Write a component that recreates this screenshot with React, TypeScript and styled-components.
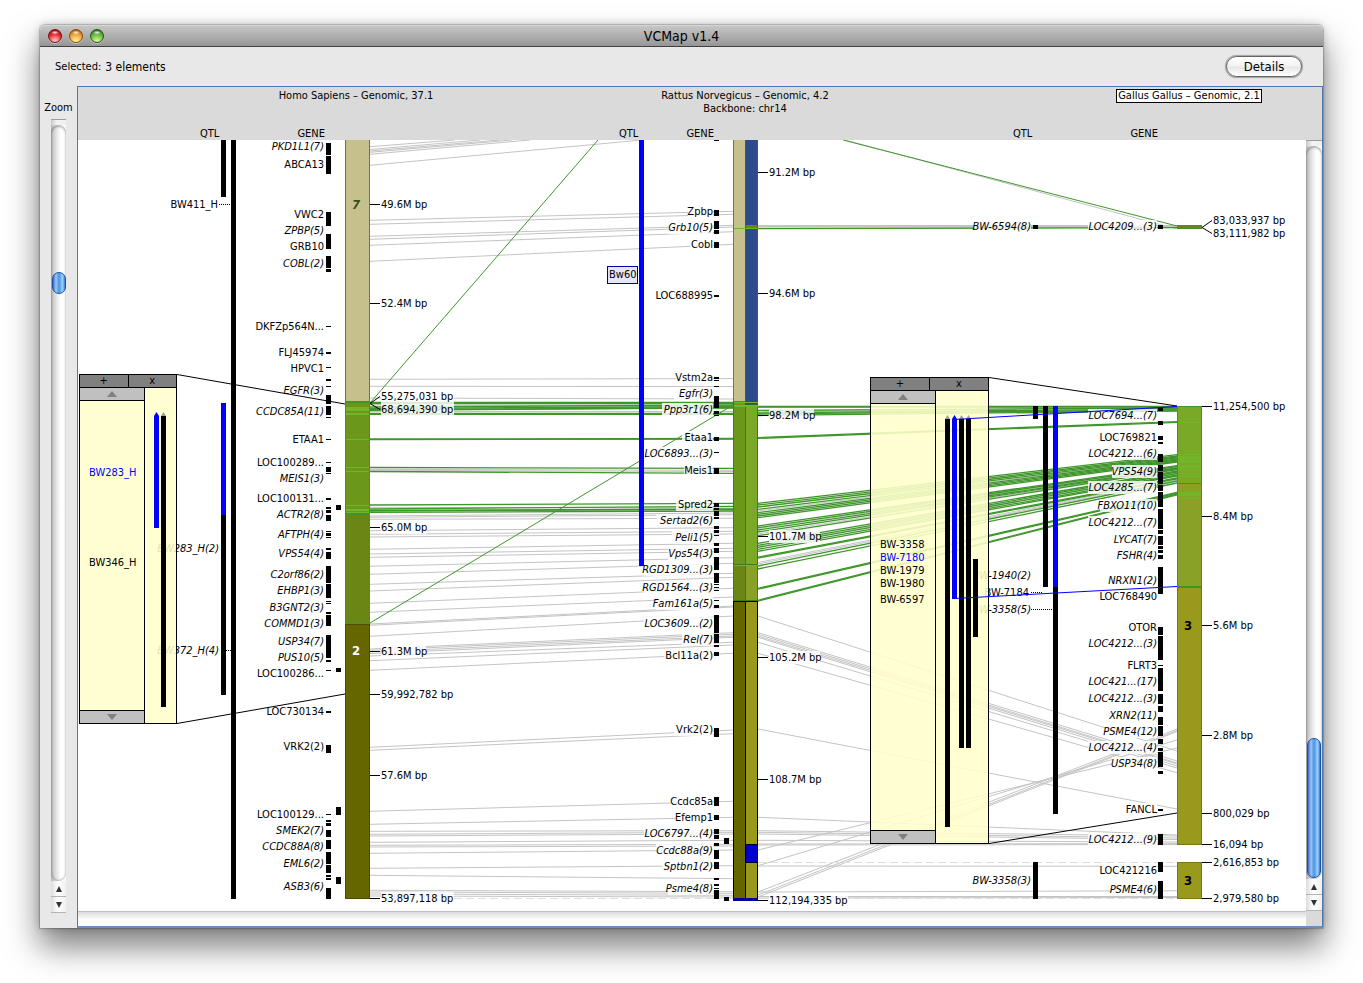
import React from 'react';
import styled, { createGlobalStyle } from 'styled-components';

const FONT = '"DejaVu Sans Condensed", "Noto Sans", sans-serif';

const GlobalStyle = createGlobalStyle`
  * { box-sizing: border-box; }
  body { margin: 0; background: #fff; font-family: ${FONT}; font-size: 11px; color: #000; }
  button { font-family: inherit; color: inherit; padding: 0; margin: 0; }
`;

/* ---------- window chrome ---------- */

const Page = styled.div`
  padding: 25px 40px 55px;
  overflow: hidden;
`;

const AppWindow = styled.main`
  display: flex;
  flex-direction: column;
  background: #e8e8e8;
  border-radius: 5px 5px 0 0;
  box-shadow: 0 18px 32px 1px rgba(0, 0, 0, 0.5), 0 0 8px rgba(0, 0, 0, 0.2), 0 0 1px 1px rgba(0, 0, 0, 0.2);
`;

const TitleBar = styled.header`
  display: grid;
  grid-template-columns: 1fr auto 1fr;
  align-items: center;
  height: 22px;
  padding: 0 8px;
  border-radius: 5px 5px 0 0;
  border-top: 1px solid #d6d6d6;
  border-bottom: 1px solid #404040;
  background: linear-gradient(#c6c6c6, #969696);
`;

const Lights = styled.div`
  display: flex;
  gap: 7px;
`;

const Light = styled.button<{ $dark: string; $mid: string; $glow: string }>`
  width: 14px;
  height: 14px;
  border: 1px solid ${(p) => p.$dark};
  border-radius: 50%;
  background:
    radial-gradient(ellipse 4px 2px at 50% 22%, rgba(255, 255, 255, 0.9), transparent),
    radial-gradient(circle at 50% 95%, ${(p) => p.$glow} 10%, ${(p) => p.$mid} 60%, ${(p) => p.$dark});
  box-shadow: 0 1px 0 rgba(255, 255, 255, 0.4);
`;

const WindowTitle = styled.h1`
  margin: 0;
  font-size: 14px;
  line-height: 20px;
  font-weight: 400;
`;

const Toolbar = styled.div`
  display: flex;
  align-items: center;
  height: 39px;
  padding: 0 21px 0 15px;
  gap: 4px;
`;

const Caption = styled.span`
  font-size: 11px;
  line-height: 16px;
`;

const SelectionCount = styled.output`
  flex: 1;
  font-size: 12px;
  line-height: 16px;
`;

const DetailsButton = styled.button`
  width: 76px;
  height: 21px;
  border: 1px solid #636363;
  border-radius: 11px;
  box-shadow: 0 0 1px 1px rgba(0, 0, 0, 0.3);
  font-size: 13px;
  line-height: 16px;
  background: linear-gradient(#ffffff, #f2f2f2 48%, #e6e6e6 52%, #ffffff);
`;

const Body = styled.div`
  display: flex;
  align-items: stretch;
`;

const ZoomPanel = styled.aside`
  width: 37px;
  display: flex;
  flex-direction: column;
  align-items: center;
  padding: 14px 0 15px;
`;

const ZoomLabel = styled.label`
  font-size: 11px;
  line-height: 16px;
  margin-bottom: 3px;
`;

/* ---------- scroll bars ---------- */

const Bar = styled.div`
  width: 15px;
  flex: 1;
  display: flex;
  flex-direction: column;
  background: linear-gradient(90deg, #b4b4b4, #dedede 30%, #ffffff 65%, #fafafa);
`;

const BarCap = styled.div`
  height: 6px;
  border-top: 1px solid #9c9c9c;
  background: linear-gradient(90deg, #c9c9c9, #f4f4f4 40%, #efefef);
`;

const BarTrack = styled.div`
  flex: 1;
  display: flex;
  flex-direction: column;
  align-items: center;
  border-radius: 8px;
  box-shadow: inset 0 2px 2px rgba(0, 0, 0, 0.25), inset 0 -1px 2px rgba(0, 0, 0, 0.25);
`;

const Gap = styled.div<{ $grow: number }>`
  flex: ${(p) => p.$grow} 1 0;
`;

const Thumb = styled.div<{ $height: number }>`
  width: 14px;
  height: ${(p) => p.$height}px;
  border-radius: 7px;
  border: 1px solid #1f4fa3;
  background: linear-gradient(90deg, #3668c8, #9cc7f4 25%, #4b93e8 50%, #9ad3fb 80%, #3c74cc);
`;

const BarButton = styled.button`
  height: 16px;
  display: flex;
  align-items: center;
  justify-content: center;
  border: 0;
  border-bottom: 1px solid #b4b4b4;
  background: linear-gradient(90deg, #dcdcdc, #ffffff 45%, #f0f0f0);
`;

const Arrow = ({ down, wide }: { down?: boolean; wide?: boolean }) => (
  <svg
    width={wide ? 10 : 6}
    height={6}
    viewBox="0 0 8 8"
    preserveAspectRatio="none"
    fill={wide ? '#808080' : '#333'}
    aria-hidden="true"
  >
    <path d={down ? 'M0 0h8L4 8z' : 'M0 8h8L4 0z'} />
  </svg>
);

type ScrollProps = { id?: string; label: string; thumb: number; before: number; after: number };

const VerticalScroll = ({ id, label, thumb, before, after }: ScrollProps) => (
  <Bar>
    <BarCap />
    <BarTrack id={id} role="scrollbar" aria-label={label} aria-orientation="vertical" aria-controls="map" aria-valuenow={Math.round((100 * before) / (before + after))}>
      <Gap $grow={before} />
      <Thumb $height={thumb} />
      <Gap $grow={after} />
    </BarTrack>
    <BarButton aria-label={`${label} up`}><Arrow /></BarButton>
    <BarButton aria-label={`${label} down`}><Arrow down /></BarButton>
  </Bar>
);

const HorizontalBar = styled.div`
  flex: 1;
  height: 15px;
  border-top: 1px solid #c0c0c0;
  background: linear-gradient(#dcdcdc, #fafafa 50%, #ffffff);
`;

const Corner = styled.div`
  width: 16px;
  background: #dadada;
`;

/* ---------- map frame and its heading ---------- */

const MapFrame = styled.section`
  flex: 1;
  min-width: 0;
  border: 1px solid #4f78ac;
  border-bottom: 2px solid #6290c8;
`;

const MapHead = styled.div`
  display: flex;
  height: 53px;
  background: #dadada;
  overflow: hidden;
`;

const Species = styled.div<{ $width: number }>`
  flex: 0 0 ${(p) => p.$width}px;
  display: flex;
  flex-direction: column;
  justify-content: space-between;
`;

const SpeciesTitle = styled.div`
  width: 222px;
  margin: 2px 0 0 167px;
  text-align: center;
  line-height: 13px;
`;

const SpeciesName = styled.span<{ $active?: boolean }>`
  display: inline-block;
  padding: 0 1px;
  line-height: ${(p) => (p.$active ? 12 : 13)}px;
  ${(p) => (p.$active ? 'border: 1px solid #000; background: #fff;' : '')}
`;

const TrackNames = styled.div<{ $inset: number }>`
  display: flex;
  justify-content: space-between;
  width: 247px;
  padding-left: ${(p) => p.$inset}px;
  line-height: 13px;
`;

const MapBody = styled.div`
  display: flex;
`;

const Canvas = styled.div`
  position: relative;
  flex: 1;
  min-width: 0;
  height: 771px;
  overflow: hidden;
  background: #fff;
`;

const Scene = styled.svg`
  display: block;
  font-family: ${FONT};
  font-size: 11px;
`;

const Overlay = styled(Scene)`
  position: absolute;
  left: 0;
  top: 0;
  pointer-events: none;
`;

const MapFoot = styled.div`
  display: flex;
`;

const ScrollSlot = styled.div`
  display: flex;
  width: 16px;
`;

/* ---------- overlap boxes ---------- */

const Popup = styled.div<{ $x: number; $y: number; $w: number; $h: number }>`
  position: absolute;
  left: ${(p) => p.$x}px;
  top: ${(p) => p.$y}px;
  width: ${(p) => p.$w}px;
  height: ${(p) => p.$h}px;
  display: flex;
  flex-direction: column;
  border: 1px solid #000;
  background: rgba(255, 255, 204, 0.88);
`;

const PopupHead = styled.div`
  display: flex;
  height: 13px;
  border-bottom: 1px solid #000;
  background: #808080;
`;

const PopupButton = styled.button`
  flex: 1;
  border: 0;
  background: none;
  font-size: 11px;
  line-height: 12px;
  & + & { border-left: 1px solid #000; }
`;

const PopupList = styled.div`
  width: 65px;
  flex: 1;
  display: flex;
  flex-direction: column;
  justify-content: space-between;
  border-right: 1px solid #000;
`;

const PopupScroll = styled.button<{ $down?: boolean }>`
  height: 13px;
  display: flex;
  align-items: center;
  justify-content: center;
  border: 0;
  border-${(p) => (p.$down ? 'top' : 'bottom')}: 1px solid #000;
  background: #c0c0c0;
`;

const OverlapBox = ({ name, ...box }: { name: string; $x: number; $y: number; $w: number; $h: number }) => (
  <Popup {...box} role="group" aria-label={name}>
    <PopupHead>
      <PopupButton>+</PopupButton>
      <PopupButton>x</PopupButton>
    </PopupHead>
    <PopupList>
      <PopupScroll aria-label={`${name} up`}><Arrow wide /></PopupScroll>
      <PopupScroll $down aria-label={`${name} down`}><Arrow down wide /></PopupScroll>
    </PopupList>
  </Popup>
);

/* ---------- map data ---------- */
/* All positions are in scene units; the visible part starts at (78, 140). */

const VIEW = { x: 78, y: 140, w: 1228, h: 771 };

type LabelData = [string, number];
type Span = [number, number];

const GENES: { end: number; labels: LabelData[] }[] = [
  {
    end: 324,
    labels: [
      ['PKD1L1(7)', 146], ['ABCA13', 164], ['VWC2', 214], ['ZPBP(5)', 230], ['GRB10', 246], ['COBL(2)', 263],
      ['DKFZp564N...', 326], ['FLJ45974', 352], ['HPVC1', 368], ['EGFR(3)', 390], ['CCDC85A(11)', 411],
      ['ETAA1', 439], ['LOC100289...', 462], ['MEIS1(3)', 478], ['LOC100131...', 498], ['ACTR2(8)', 514],
      ['AFTPH(4)', 534], ['VPS54(4)', 553], ['C2orf86(2)', 574], ['EHBP1(3)', 590], ['B3GNT2(3)', 607],
      ['COMMD1(3)', 623], ['USP34(7)', 641], ['PUS10(5)', 657], ['LOC100286...', 673], ['LOC730134', 711],
      ['VRK2(2)', 746], ['LOC100129...', 814], ['SMEK2(7)', 830], ['CCDC88A(8)', 846], ['EML6(2)', 863], ['ASB3(6)', 886],
    ],
  },
  {
    end: 713,
    labels: [
      ['Zpbp', 211], ['Grb10(5)', 227], ['Cobl', 244], ['LOC688995', 295], ['Vstm2a', 377], ['Egfr(3)', 393],
      ['Ppp3r1(6)', 409], ['Etaa1', 437], ['LOC6893...(3)', 453], ['Meis1', 470], ['Spred2', 504],
      ['Sertad2(6)', 520], ['Peli1(5)', 537], ['Vps54(3)', 553], ['RGD1309...(3)', 569], ['RGD1564...(3)', 587],
      ['Fam161a(5)', 603], ['LOC3609...(2)', 623], ['Rel(7)', 639], ['Bcl11a(2)', 655], ['Vrk2(2)', 729],
      ['Ccdc85a', 801], ['Efemp1', 817], ['LOC6797...(4)', 833], ['Ccdc88a(9)', 850], ['Sptbn1(2)', 866], ['Psme4(8)', 888],
    ],
  },
  {
    end: 1157,
    labels: [
      ['LOC4209...(3)', 226], ['LOC7694...(7)', 415], ['LOC769821', 437], ['LOC4212...(6)', 453], ['VPS54(9)', 471],
      ['LOC4285...(7)', 487], ['FBXO11(10)', 505], ['LOC4212...(7)', 522], ['LYCAT(7)', 539], ['FSHR(4)', 555],
      ['NRXN1(2)', 580], ['LOC768490', 596], ['OTOR', 627], ['LOC4212...(3)', 643], ['FLRT3', 665],
      ['LOC421...(17)', 681], ['LOC4212...(3)', 698], ['XRN2(11)', 715], ['PSME4(12)', 731], ['LOC4212...(4)', 747],
      ['USP34(8)', 763], ['FANCL', 809], ['LOC4212...(9)', 839], ['LOC421216', 870], ['PSME4(6)', 889],
    ],
  },
];

/* Pairs that are drawn upright although they hold a count. */
const UPRIGHT = new Set(['VRK2(2)', 'Bcl11a(2)', 'Vrk2(2)']);

const GENE_BARS: { x: number; spans: Span[] }[] = [
  {
    x: 326,
    spans: [
      [143, 155], [156, 174], [212, 226], [234, 249], [256, 268], [269, 272], [326, 327], [352, 354], [367, 368],
      [379, 381], [386, 387], [395, 404], [406, 415], [417, 418], [439, 440], [462, 463], [467, 472], [473, 474],
      [498, 500], [507, 509], [510, 513], [515, 521], [531, 532], [533, 536], [537, 538], [548, 550], [552, 559],
      [566, 583], [584, 598], [601, 602], [603, 604], [612, 614], [615, 626], [635, 658], [660, 662], [670, 671],
      [711, 713], [745, 753], [814, 815], [820, 822], [823, 826], [830, 837], [840, 849], [852, 864], [865, 873],
      [875, 877], [878, 880], [888, 899],
    ],
  },
  { x: 336, spans: [[505, 510], [668, 672], [807, 815], [877, 884]] },
  {
    x: 714,
    spans: [
      [140, 141], [210, 216], [221, 229], [230, 234], [242, 248], [295, 297], [377, 379], [380, 381], [386, 387],
      [396, 408], [411, 414], [415, 416], [437, 441], [452, 453], [468, 474], [503, 507], [508, 510], [511, 516],
      [517, 519], [526, 529], [530, 533], [535, 536], [543, 546], [548, 553], [557, 570], [573, 583], [584, 585],
      [587, 588], [590, 591], [600, 601], [605, 608], [615, 633], [634, 643], [645, 647], [652, 656], [728, 737],
      [797, 806], [815, 820], [829, 834], [835, 839], [843, 846], [850, 859], [862, 869], [878, 880], [884, 886],
      [888, 889], [890, 899],
    ],
  },
  { x: 724, spans: [[838, 844], [897, 901]] },
  {
    x: 1158,
    spans: [
      [225, 229], [407, 411], [421, 425], [436, 440], [442, 444], [454, 462], [465, 471], [472, 484], [485, 491],
      [492, 507], [509, 529], [530, 534], [536, 545], [546, 549], [550, 553], [555, 559], [567, 594], [627, 635],
      [636, 660], [665, 666], [668, 691], [694, 704], [706, 712], [717, 725], [726, 736], [739, 744], [748, 751],
      [752, 767], [771, 774], [809, 811], [834, 845], [862, 872], [881, 899],
    ],
  },
];

/* x, top, bottom, selected */
const QTL_BARS: [number, number, number, boolean][] = [
  [221, 140, 197, false], [231, 140, 899, false], [221, 403, 515, true], [221, 515, 695, false],
  [639, 140, 566, true],
  [1033, 225, 229, false], [1033, 406, 419, false], [1043, 406, 587, false], [1053, 406, 587, true],
  [1053, 587, 814, false], [1033, 862, 899, false],
];

const QTL_LABELS: [string, number, number][] = [
  ['BW411_H', 218, 204], ['BW283_H(2)', 219, 548], ['BW372_H(4)', 219, 650],
  ['BW-6594(8)', 1031, 226], ['BW-1940(2)', 1031, 575], ['BW-7184', 1029, 592], ['BW-3358(5)', 1031, 609],
  ['BW-3358(3)', 1031, 880],
];

const DOTS: [number, number, number][] = [
  [219, 231, 204], [226, 231, 650], [1031, 1043, 592], [1031, 1053, 609],
];

/* x of the tick, y of the label and optional y where the tick starts */
const TICKS: [number, string, number, number?][] = [
  [370, '49.6M bp', 204], [370, '52.4M bp', 303], [370, '55,275,031 bp', 396, 403], [370, '68,694,390 bp', 409, 403],
  [370, '65.0M bp', 527], [370, '61.3M bp', 651], [370, '59,992,782 bp', 694], [370, '57.6M bp', 775],
  [370, '53,897,118 bp', 898],
  [758, '91.2M bp', 172], [758, '94.6M bp', 293], [758, '98.2M bp', 415], [758, '101.7M bp', 536],
  [758, '105.2M bp', 657], [758, '108.7M bp', 779], [758, '112,194,335 bp', 900],
  [1202, '83,033,937 bp', 220, 227], [1202, '83,111,982 bp', 233, 227], [1202, '11,254,500 bp', 406],
  [1202, '8.4M bp', 516], [1202, '5.6M bp', 625], [1202, '2.8M bp', 735], [1202, '800,029 bp', 813],
  [1202, '16,094 bp', 844], [1202, '2,616,853 bp', 862], [1202, '2,979,580 bp', 898],
];

/* x, y, width, height, fill, edge */
const SEGMENTS: [number, number, number, number, string, string][] = [
  [345, 138, 25, 264, '#c6c18c', '#43932b'],
  [345, 402, 25, 112, '#6b981b', '#43932b'],
  [345, 514, 25, 110, '#6a8715', '#43932b'],
  [345, 624, 25, 275, '#666600', '#4d4d00'],
  [733, 138, 13, 264, '#c6c18c', '#43932b'],
  [733, 402, 13, 163, '#6b981b', '#3c7d1a'],
  [733, 565, 13, 36, '#6a8715', '#3c7d1a'],
  [733, 601, 13, 298, '#666600', '#000000'],
  [745, 138, 13, 267, '#2f4a8c', '#2b6a3a'],
  [745, 405, 13, 160, '#7aa928', '#3c7d1a'],
  [745, 565, 13, 36, '#88a126', '#3c7d1a'],
  [745, 601, 13, 244, '#99991e', '#000000'],
  [745, 844, 13, 19, '#0000cc', '#000000'],
  [745, 862, 13, 37, '#99991e', '#000000'],
  [733, 898, 25, 3, '#0000a0', '#0000a0'],
  [1177, 225, 25, 4, '#6a8715', '#43932b'],
  [1177, 406, 25, 78, '#7aa928', '#43932b'],
  [1177, 483, 25, 104, '#88a126', '#43932b'],
  [1177, 587, 25, 258, '#99991e', '#77770f'],
  [1177, 862, 25, 37, '#99991e', '#77770f'],
];

/* Bright stripes across the chromosomes: x, y, width, height */
const STRIPES: [number, number, number, number][] = [
  [346, 407, 23, 4], [346, 413, 23, 2], [346, 439, 23, 1], [346, 467, 23, 1], [346, 471, 23, 1], [346, 505, 23, 1],
  [346, 509, 23, 2], [346, 512, 23, 1],
  [734, 402, 24, 1], [734, 405, 24, 2], [734, 228, 24, 1], [734, 565, 24, 1],
  [1178, 422, 23, 1], [1178, 454, 23, 1], [1178, 456, 23, 7], [1178, 465, 23, 4], [1178, 470, 23, 1],
  [1178, 473, 23, 1], [1178, 476, 23, 1], [1178, 492, 23, 4], [1178, 498, 23, 1],
];

/* Links between neighbouring maps: y on the left, y on the right */
const GRAY_A: Span[] = [
  [220.3, 211.3], [224.3, 214.3], [236.3, 225.3], [239.3, 227], [245.3, 231.7], [261.3, 244.3], [379.3, 378.6],
  [386.3, 386.6], [398, 399], [405, 405.5], [411.5, 411.5], [469.3, 470.3], [470.3, 471.5], [507.3, 508],
  [516, 513], [517.3, 514.7], [519.3, 518.3], [530.7, 527.7], [534.3, 531.3], [537, 534], [549.3, 543.3],
  [554, 548.3], [557.3, 551.3], [566.3, 557.7], [574.3, 563.3], [584.3, 573.3], [591, 577.3], [603.3, 588.3],
  [612.3, 597], [624, 606], [625.3, 607], [636.3, 616], [649, 632.7], [650.3, 634.3], [652, 636], [653.7, 637.3],
  [656, 642.3], [660.7, 645], [670.3, 653.3], [747.3, 730], [750.3, 733.7], [811.3, 801.3], [824.3, 817.3],
  [831.3, 830.7], [834.3, 832.3], [836, 834], [842.3, 840.3], [845.3, 844.3], [847, 846], [853.3, 850],
  [868.3, 865.7], [875.3, 878.7], [890.3, 891.7], [892, 893.3], [894, 895.3], [896, 897],
];

const GREEN_A: Span[] = [
  [402.5, 402.5], [403.5, 403.5], [407, 405], [408.5, 406.5], [409.6, 408], [410.4, 407.5], [413.5, 413.5],
  [414.3, 414.3], [439, 438.5], [439.7, 439], [467.5, 468.4], [471.5, 473.4], [505, 503.3], [509, 506.3],
  [510.3, 509], [511, 509.6], [512.3, 511],
];

const GRAY_B: Span[] = [
  [225.5, 225.5], [226.5, 226.5], [412, 408], [415, 410.5], [511, 458.5], [528.5, 467.5], [534, 469],
  [546.5, 473], [562.5, 479], [564, 480], [616, 751], [632.7, 761], [634.3, 763], [636, 764], [637.3, 766],
  [642.3, 768], [653.3, 772.7], [850, 748], [865.7, 740], [892, 729], [895, 730.5], [897, 731.5], [729, 809],
  [817.3, 835], [830.7, 836], [832.3, 838], [834, 839.5], [840.3, 842], [844, 843.6], [845, 844.6],
  [866, 866.3], [892, 890.8], [896.5, 896.5], [898, 897.5],
];

const GREEN_B: Span[] = [
  [228.5, 227.7], [406.5, 406.5], [407.2, 407], [410.5, 408], [413, 409], [414, 410], [415.5, 411], [437.6, 421.6],
  [438.4, 422.4], [503.3, 454.7], [505, 456], [507, 457], [509.3, 457.8], [512.7, 459], [514.3, 460], [516, 461],
  [517.7, 462], [526, 465.6], [527.7, 466.5], [530, 468], [532, 468.6], [535.7, 469.5], [543.3, 471],
  [545.3, 472], [547.3, 473.5], [549.3, 475], [551.3, 476], [557.2, 478], [558, 478.8], [566, 481], [569, 483],
  [588.3, 492.4], [589.2, 493.2], [600.3, 494], [601.1, 494.8],
];

/* ---------- map drawing ---------- */

const isGroup = (text: string) => /\(\d+\)$/.test(text) && !UPRIGHT.has(text);
const roughWidth = (text: string) => [...text].reduce((sum, c) => sum + (/[.,()il ]/.test(c) ? 4 : 6), 1);

const Label = ({ text, x, y, anchor = 'end' }: { text: string; x: number; y: number; anchor?: 'start' | 'end' }) => {
  const w = roughWidth(text);
  return (
    <g>
      <rect x={anchor === 'end' ? x - w : x} y={y - 6} width={w} height={13} fill="#fff" fillOpacity={0.82} />
      <text x={x} y={y + 4} textAnchor={anchor} fontStyle={isGroup(text) ? 'italic' : 'normal'}>{text}</text>
    </g>
  );
};

const Links = ({ from, to, pairs, color, width }: { from: number; to: number; pairs: Span[]; color: string; width: number }) => (
  <g stroke={color} strokeWidth={width}>
    {pairs.map(([a, b], i) => (
      <line key={i} x1={from} y1={a} x2={to} y2={b} />
    ))}
  </g>
);

const GRAY = '#c4c4c4';
const GREEN = '#3f962b';

const MapScene = () => (
  <Scene width={VIEW.w} height={VIEW.h} viewBox={`${VIEW.x} ${VIEW.y} ${VIEW.w} ${VIEW.h}`} role="img" aria-label="Synteny map">
    <g stroke={GRAY}>
      {[[146.7, 455], [149.5, 480], [151, 500], [152.3, 512], [154.3, 530], [165.3, 642]].map(([y, x]) => (
        <line key={y} x1={370} y1={y} x2={x} y2={140} />
      ))}
      <line x1={845} y1={140} x2={1177} y2={229} />
    </g>
    <Links from={370} to={733} pairs={GRAY_A} color={GRAY} width={1} />
    <Links from={758} to={1177} pairs={GRAY_B} color={GRAY} width={1} />
    <g stroke="#dedede" strokeDasharray="8 4">
      <line x1={758} y1={862.5} x2={1177} y2={862.5} />
      <line x1={370} y1={898.5} x2={733} y2={898.5} />
      <line x1={758} y1={898.5} x2={1177} y2={898.5} />
    </g>
    <Links from={370} to={733} pairs={GREEN_A} color={GREEN} width={1.3} />
    <Links from={758} to={1177} pairs={GREEN_B} color={GREEN} width={1.3} />
    <g stroke={GREEN}>
      <line x1={370} y1={403} x2={598} y2={140} />
      <line x1={370} y1={623} x2={733} y2={405} />
      <line x1={843} y1={140} x2={1177} y2={226} />
    </g>

    {SEGMENTS.map(([x, y, w, h, fill, edge], i) => (
      <rect key={i} x={x + 0.5} y={y + 0.5} width={w - 1} height={h - 1} fill={fill} stroke={edge} />
    ))}
    <rect x={746} y={225} width={11} height={3} fill="#6a8715" />
    {STRIPES.map(([x, y, w, h], i) => (
      <rect key={i} x={x} y={y} width={w} height={h} fill="#72b528" />
    ))}

    {GENES.map((g) => g.labels.map(([text, y]) => <Label key={`${g.end}-${y}`} text={text} x={g.end} y={y} />))}
    {QTL_LABELS.map(([text, x, y]) => <Label key={`${x}-${y}`} text={text} x={x} y={y} />)}
    {QTL_BARS.map(([x, top, bottom, on], i) => (
      <rect key={i} x={x} y={top} width={5} height={bottom - top} fill={on ? '#0000ff' : '#000'} />
    ))}
    {GENE_BARS.map(({ x, spans }) =>
      spans.map(([a, b]) => <rect key={`${x}-${a}`} x={x} y={a} width={5} height={b - a} fill="#000" />)
    )}
    {DOTS.map(([a, b, y]) => (
      <line key={y} x1={a} y1={y + 0.5} x2={b} y2={y + 0.5} stroke="#000" strokeDasharray="1 1" />
    ))}
    {TICKS.map(([x, text, y, start]) => (
      <g key={`${x}-${y}`}>
        <Label text={text} x={x + 11} y={y} anchor="start" />
        <line x1={x} y1={(start ?? y) + 0.5} x2={x + 10} y2={y + 0.5} stroke="#000" />
      </g>
    ))}

    <rect x={607.5} y={266.5} width={30} height={17} fill="#e6e6f8" stroke="#0000a0" />
    <text x={609} y={278}>Bw60</text>

    <g fontSize={13} fontWeight={700} textAnchor="middle">
      <text x={356} y={209} fill="#365019" fontStyle="italic">7</text>
      <text x={356} y={655} fill="#fff">2</text>
      <text x={1188} y={630}>3</text>
      <text x={1188} y={885}>3</text>
    </g>
  </Scene>
);

/* x, top, bottom, selected, has an arrow head on top */
const BOX_BARS: [number, number, number, boolean, boolean][] = [
  [154, 416, 528, true, true], [161, 416, 707, false, true],
  [945, 419, 827, false, true], [952, 419, 599, true, true], [959, 419, 748, false, true],
  [966, 419, 748, false, true], [973, 559, 637, false, false],
];

const BOX_LABELS: [string, number, number, boolean][] = [
  ['BW283_H', 89, 472, true], ['BW346_H', 89, 562, false],
  ['BW-3358', 880, 544, false], ['BW-7180', 880, 557, true], ['BW-1979', 880, 570, false],
  ['BW-1980', 880, 583, false], ['BW-6597', 880, 599, false],
];

const BoxScene = () => (
  <Overlay width={VIEW.w} height={VIEW.h} viewBox={`${VIEW.x} ${VIEW.y} ${VIEW.w} ${VIEW.h}`}>
    {BOX_BARS.map(([x, top, bottom, on, head]) => (
      <g key={x}>
        <rect x={x} y={top} width={5} height={bottom - top} fill={on ? '#0000ff' : '#000'} />
        {head && <path d={`M${x} ${top}L${x + 2.5} ${top - 4}L${x + 5} ${top}z`} fill={on ? '#0000ff' : '#a0a084'} />}
      </g>
    ))}
    {BOX_LABELS.map(([text, x, y, on]) => (
      <text key={text} x={x} y={y + 4} fill={on ? '#0000ff' : '#000'}>{text}</text>
    ))}
    <g stroke="#000">
      <line x1={177} y1={374.5} x2={345} y2={404} />
      <line x1={177} y1={723.5} x2={345} y2={694} />
      <line x1={989} y1={377.5} x2={1177} y2={406} />
      <line x1={989} y1={843.5} x2={1177} y2={813} />
    </g>
    <g stroke="#0000ff">
      <line x1={954} y1={419.5} x2={1177} y2={406.5} />
      <line x1={954} y1={598.5} x2={1177} y2={586.5} />
    </g>
  </Overlay>
);

export default function App() {
  return (
    <>
      <GlobalStyle />
      <Page>
        <AppWindow>
          <TitleBar>
            <Lights>
              <Light aria-label="Close" $dark="#7a1010" $mid="#e0222c" $glow="#ffb9b9" />
              <Light aria-label="Minimize" $dark="#8a4a10" $mid="#ee9a35" $glow="#ffee8a" />
              <Light aria-label="Zoom window" $dark="#1f5a14" $mid="#62b03c" $glow="#cdf590" />
            </Lights>
            <WindowTitle>VCMap v1.4</WindowTitle>
          </TitleBar>
          <Toolbar>
            <Caption id="selected">Selected:</Caption>
            <SelectionCount aria-labelledby="selected">3 elements</SelectionCount>
            <DetailsButton>Details</DetailsButton>
          </Toolbar>
          <Body>
            <ZoomPanel>
              <ZoomLabel htmlFor="zoom">Zoom</ZoomLabel>
              <VerticalScroll id="zoom" label="Zoom" thumb={22} before={147} after={587} />
            </ZoomPanel>
            <MapFrame>
              <MapHead>
                <Species $width={388}>
                  <SpeciesTitle><SpeciesName>Homo Sapiens – Genomic, 37.1</SpeciesName></SpeciesTitle>
                  <TrackNames $inset={122}><span>QTL</span><span>GENE</span></TrackNames>
                </Species>
                <Species $width={444}>
                  <SpeciesTitle>
                    <SpeciesName>Rattus Norvegicus – Genomic, 4.2</SpeciesName>
                    <SpeciesName>Backbone: chr14</SpeciesName>
                  </SpeciesTitle>
                  <TrackNames $inset={152}><span>QTL</span><span>GENE</span></TrackNames>
                </Species>
                <Species $width={390}>
                  <SpeciesTitle><SpeciesName $active>Gallus Gallus – Genomic, 2.1</SpeciesName></SpeciesTitle>
                  <TrackNames $inset={102}><span>QTL</span><span>GENE</span></TrackNames>
                </Species>
              </MapHead>
              <MapBody>
                <Canvas id="map">
                  <MapScene />
                  <OverlapBox name="Human overlap" $x={1} $y={234} $w={98} $h={350} />
                  <OverlapBox name="Chicken overlap" $x={792} $y={237} $w={119} $h={467} />
                  <BoxScene />
                </Canvas>
                <ScrollSlot>
                  <VerticalScroll label="Map" thumb={140} before={591} after={1} />
                </ScrollSlot>
              </MapBody>
              <MapFoot>
                <HorizontalBar />
                <Corner />
              </MapFoot>
            </MapFrame>
          </Body>
        </AppWindow>
      </Page>
    </>
  );
}
